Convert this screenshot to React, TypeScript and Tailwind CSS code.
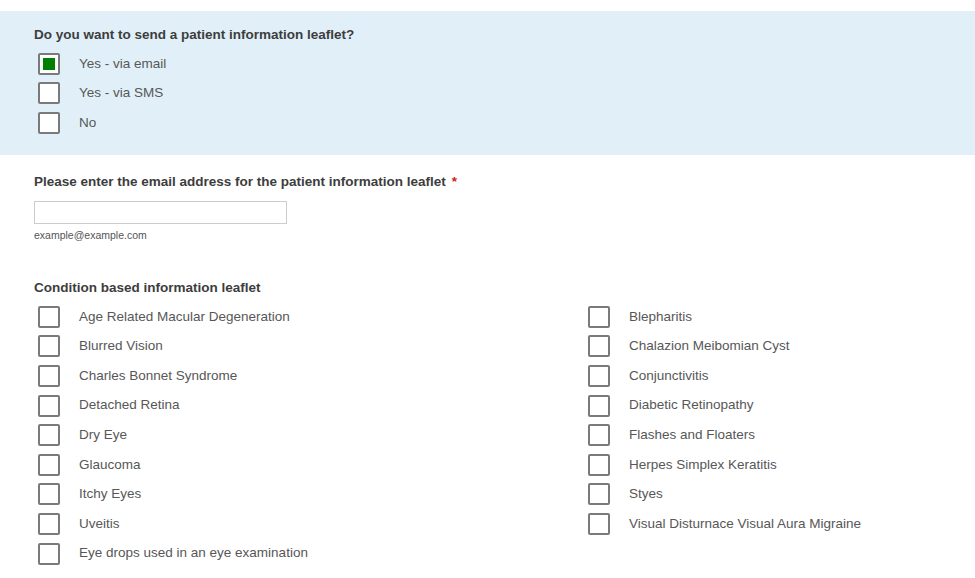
import React from 'react';

const LEFT = [
  'Age Related Macular Degeneration',
  'Blurred Vision',
  'Charles Bonnet Syndrome',
  'Detached Retina',
  'Dry Eye',
  'Glaucoma',
  'Itchy Eyes',
  'Uveitis',
  'Eye drops used in an eye examination',
];

const RIGHT = [
  'Blepharitis',
  'Chalazion Meibomian Cyst',
  'Conjunctivitis',
  'Diabetic Retinopathy',
  'Flashes and Floaters',
  'Herpes Simplex Keratitis',
  'Styes',
  'Visual Disturnace Visual Aura Migraine',
];

function Check({ label, checked = false }: { label: string; checked?: boolean }) {
  return (
    <label className="flex h-[29.6px] items-center pl-[4px]">
      <span className="flex h-[22px] w-[22px] shrink-0 items-center justify-center rounded-[2px] border-2 border-[#7a7a7a] bg-white">
        {checked && <span className="h-[12px] w-[12px] bg-[#008000]" />}
      </span>
      <span className="ml-[19px] text-[13.5px] text-[#575757]">{label}</span>
    </label>
  );
}

export default function App() {
  return (
    <div className="min-h-[578px] bg-white pt-[11px] font-['Liberation_Sans',Arial,sans-serif]">
      <section className="h-[144px] bg-[#e1f0f8] px-[34px] pt-[16px]">
        <h2 className="text-[13.5px] leading-[16px] font-bold text-[#3d3d3d]">
          Do you want to send a patient information leaflet?
        </h2>
        <div className="mt-[6px] flex flex-col">
          <Check label="Yes - via email" checked />
          <Check label="Yes - via SMS" />
          <Check label="No" />
        </div>
      </section>

      <section className="px-[34px] pt-[19px]">
        <h2 className="text-[13.5px] leading-[16px] font-bold text-[#3d3d3d]">
          Please enter the email address for the patient information leaflet{' '}
          <span className="ml-[2px] text-[#cc2222]">*</span>
        </h2>
        <input
          type="text"
          className="mt-[11px] block h-[23px] w-[253px] border border-[#cccccc] bg-white outline-none"
        />
        <p className="mt-[5px] text-[10.5px] leading-[12px] text-[#555555]">example@example.com</p>
      </section>

      <section className="px-[34px] pt-[39px]">
        <h2 className="text-[13.5px] leading-[16px] font-bold text-[#3d3d3d]">
          Condition based information leaflet
        </h2>
        <div className="mt-[6px] grid grid-cols-[550px_1fr]">
          <div className="flex flex-col">
            {LEFT.map((l) => (
              <Check key={l} label={l} />
            ))}
          </div>
          <div className="flex flex-col">
            {RIGHT.map((l) => (
              <Check key={l} label={l} />
            ))}
          </div>
        </div>
      </section>
    </div>
  );
}
